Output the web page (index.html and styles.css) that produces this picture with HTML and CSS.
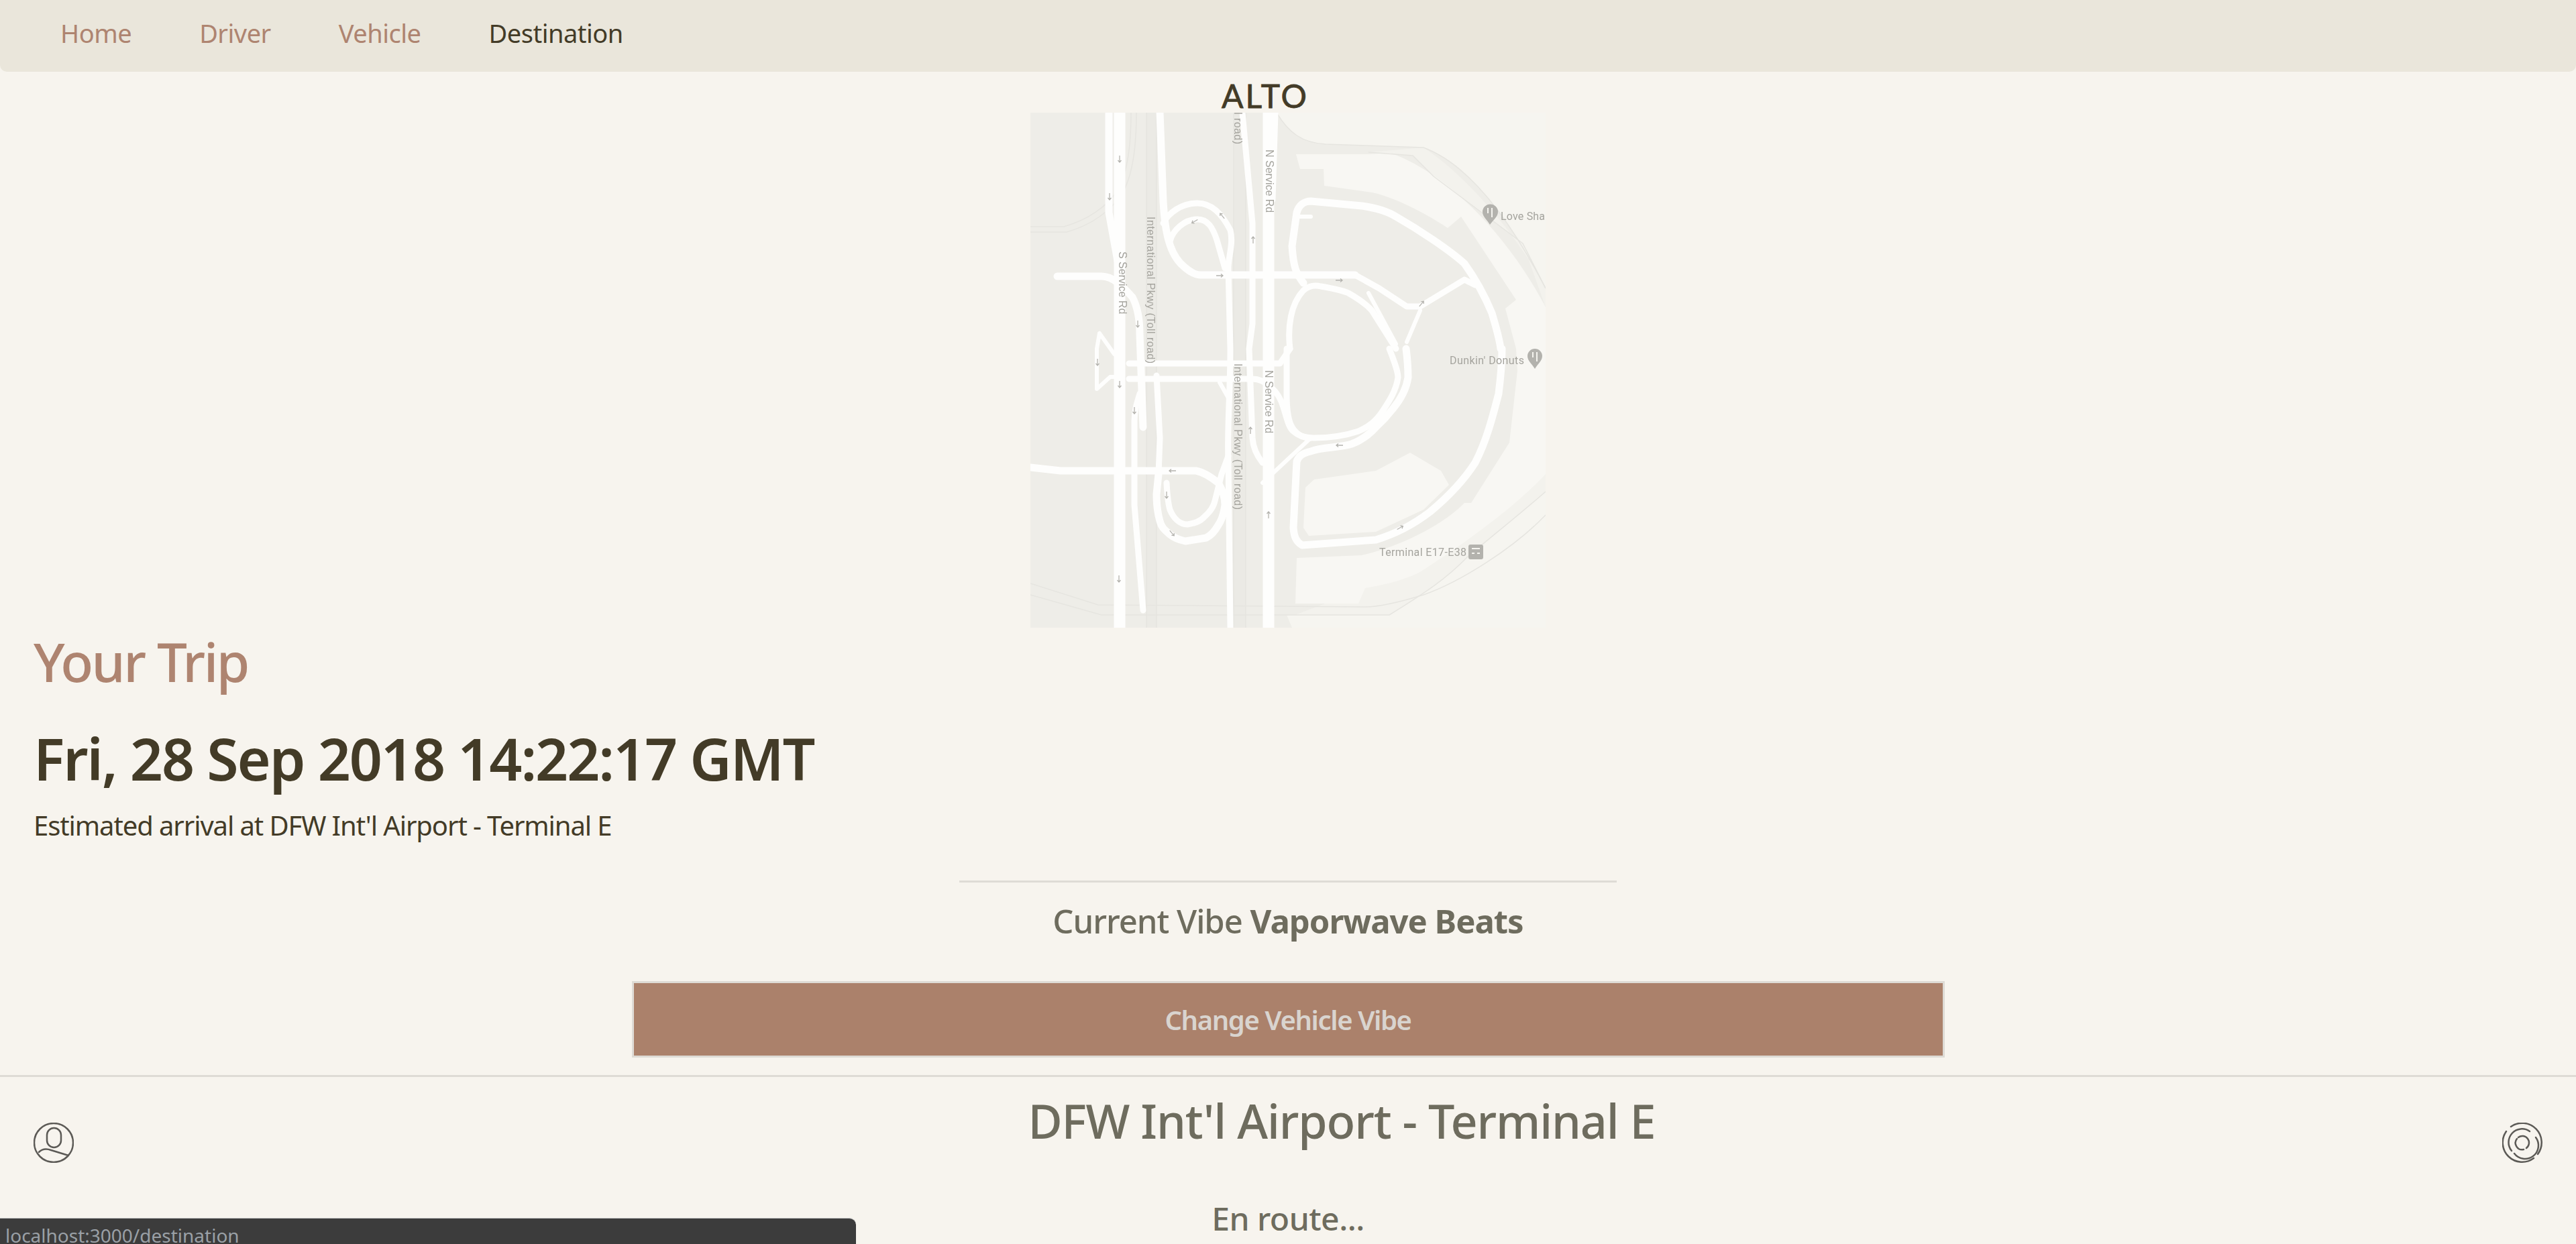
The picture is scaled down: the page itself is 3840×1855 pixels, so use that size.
FILE: index.html
```html
<!DOCTYPE html>
<html lang="en">
<head>
<meta charset="UTF-8">
<meta name="viewport" content="width=device-width, initial-scale=1.0">
<title>Alto</title>
<link rel="stylesheet" href="styles.css">
</head>
<body>
<nav class="navbar">
    <a class="nav-link" href="#">Home</a>
    <a class="nav-link" href="#">Driver</a>
    <a class="nav-link" href="#">Vehicle</a>
    <a class="nav-link active" href="#">Destination</a>
</nav>

<div class="logo">ALTO</div>

<svg class="map" viewBox="0 0 768 768" role="img" aria-label="Map of DFW Terminal E">
    <defs>
        <g id="arrow"><path d="M0 -5V5M-2.500 2L0 5L2.500 2"/></g>
    </defs>
    <rect width="768" height="768" fill="#eeede8"/>
    <path class="outside" d="M367 0C385 30 405 45 440 47L586 52C640 72 700 130 768 262V0Z"/>
    <path class="band" d="M768 262C740 205 660 100 586 52L504 59L570 64L601 95L734 195L768 290V600C720 650 640 700 586 719C560 735 545 745 535 749H395L499 709L581 685L768 539Z"/>
    <path class="outside" d="M768 565C740 590 690 630 652 662C620 695 590 715 535 749H382L390 768H768Z"/>
    <path class="apron" d="M396 62H504L535 60C600 80 700 160 768 290V539C720 590 650 640 581 685C550 700 520 705 499 709L489 732H395L397 664L494 660C540 650 610 620 647 582H657L714 492L726 385L724 352L708 292L724 279L642 155L622 172C590 150 540 125 509 119L438 109L437 84H402Z"/>
    <path class="apron" d="M410 559L423 547L515 534L566 507L612 534L624 555L586 592L515 625L415 631L407 619Z"/>
    <rect class="toll" x="173" width="15" height="768"/>
    <rect class="toll" x="303" width="18" height="768"/>

    <g class="thin">
        <path d="M367 0C385 30 405 45 440 47L586 52C640 72 700 130 768 262"/>
        <path d="M504 59L570 64L601 95L734 195L768 262"/>
        <path d="M0 170H50C85 160 115 140 130 115C145 90 150 50 150 0"/>
        <path d="M0 178H54C90 168 122 146 138 118C153 92 158 50 158 0"/>
        <path d="M768 565C740 590 690 630 652 662C620 695 590 715 535 749H382L106 749L0 719"/>
        <path d="M768 600C720 650 640 700 586 719C550 730 520 737 499 737L101 734L0 702"/>
        <path d="M173 0V768M188 0V768M303 0V768M321 0V768"/>
        <path d="M348 0V768"/>
    </g>

    <g class="road">
        <path class="wide" d="M133 0V768"/>
        <path class="wide" d="M355 0V768"/>
        <path class="mid" d="M117 0V149L132 232"/>
        <path d="M365 0L361 130"/>
        <path class="mid" d="M193 0L198 132C200 170 205 205 224 225C235 236 245 242 254 242H484"/>
        <path d="M198 165C205 150 225 135 249 135C270 135 285 150 298 175C303 195 295 215 295 232L298 352C298 420 293 470 295 520L298 768"/>
        <path d="M208 192C212 175 230 159 249 159C265 159 272 172 278 190L290 232"/>
        <path d="M316 0L331 165V315L326 352L331 485C332 500 338 512 346 522"/>
        <path class="mid" d="M40 244H106C125 244 140 262 152 275C160 290 163 310 163 330L168 469"/>
        <path d="M163 419C158 435 155 445 155 460V585L168 742"/>
        <path class="narrow" d="M103 329L99 352V412L119 394H133M103 329L125 360"/>
        <path d="M147 374H372L387 352"/>
        <path d="M147 397H331C350 397 370 415 377 439C382 455 385 470 392 475C400 482 410 485 418 485"/>
        <path class="narrow" d="M282 402L295 425"/>
        <path d="M387 352C383 320 388 285 407 265C415 258 425 257 433 259C450 262 465 265 474 269C490 278 500 285 509 295L545 352"/>
        <path d="M535 352C542 370 548 385 548 395C545 415 535 430 525 445C515 460 505 468 489 475C465 483 445 485 423 485C405 485 395 480 388 465C384 455 382 440 382 420V352"/>
        <path class="mid" d="M560 352C563 375 563 385 563 395C560 415 550 430 540 442C530 455 525 460 515 469C505 480 495 488 479 494C460 500 435 498 418 505C405 508 400 512 397 520L392 619C393 632 396 640 405 645L515 637C545 628 570 615 596 595C620 575 645 550 663 522C680 490 690 450 698 419C701 395 703 375 703 352"/>
        <path class="mid" d="M407 254C396 240 392 230 390 199L397 149C400 138 408 132 418 132L494 139C515 142 532 147 545 155C580 175 625 205 647 225C665 250 678 275 688 299C694 320 699 335 701 352"/>
        <path class="narrow" d="M397 155H418"/>
        <path d="M484 242L520 262L561 289H581L647 249L663 257"/>
        <path class="narrow" d="M581 295L561 342M504 269L545 345M418 485L346 552M282 402L295 425"/>
        <path class="mid" d="M0 529L45 534H247C258 536 270 544 280 552C288 565 290 575 290 585C288 600 285 608 280 615C275 624 270 630 262 634L231 639C222 637 214 634 208 629C200 622 195 618 193 609C189 595 188 580 188 569L191 539"/>
        <path d="M203 552C204 570 205 582 208 592C213 604 222 614 234 614C245 612 253 610 260 602C268 595 273 588 275 579L285 539L295 512"/>
        <path d="M188 392L193 485L191 539"/>
    </g>

    <g class="arrows">
        <use href="#arrow" x="133" y="69"/>
        <use href="#arrow" x="118" y="125"/>
        <use href="#arrow" x="160" y="315"/>
        <use href="#arrow" x="100" y="372"/>
        <use href="#arrow" x="133" y="405"/>
        <use href="#arrow" x="155" y="444"/>
        <use href="#arrow" x="203" y="570"/>
        <use href="#arrow" x="132" y="695"/>
        <use href="#arrow" transform="translate(332 190) rotate(180)"/>
        <use href="#arrow" transform="translate(328 474) rotate(180)"/>
        <use href="#arrow" transform="translate(355 600) rotate(180)"/>
        <use href="#arrow" transform="translate(282 243) rotate(-90)"/>
        <use href="#arrow" transform="translate(460 250) rotate(-90)"/>
        <use href="#arrow" transform="translate(461 496) rotate(90)"/>
        <use href="#arrow" transform="translate(212 534) rotate(90)"/>
        <use href="#arrow" transform="translate(286 154) rotate(140)"/>
        <use href="#arrow" transform="translate(245 162) rotate(60)"/>
        <use href="#arrow" transform="translate(583 285) rotate(-140)"/>
        <use href="#arrow" transform="translate(211 627) rotate(-40)"/>
        <use href="#arrow" transform="translate(551 619) rotate(-120)"/>
    </g>

    <g class="label">
        <text transform="translate(132 207) rotate(90)">S Service Rd</text>
        <text transform="translate(174 155) rotate(90)" textLength="219">International Pkwy (Toll road)</text>
        <text transform="translate(304 374) rotate(90)" textLength="218">International Pkwy (Toll road)</text>
        <text transform="translate(304 -171) rotate(90)" textLength="218">International Pkwy (Toll road)</text>
        <text transform="translate(351 55) rotate(90)">N Service Rd</text>
        <text transform="translate(350 384) rotate(90)">N Service Rd</text>
        <text class="poi" x="701" y="160" textLength="66">Love Sha</text>
        <text class="poi" x="625" y="375" textLength="111">Dunkin' Donuts</text>
        <text class="poi" x="520" y="661" textLength="130">Terminal E17-E38</text>
    </g>
    <path class="pin" d="M685 167C681 160 674 155 674 148A11.500 11.500 0 0 1 697 148C697 155 690 160 685 167Z"/>
    <path class="pin-mark" d="M682 142V150M688 142V156"/>
    <path class="pin" d="M752 382C748 375 741 370 741 363A11 11 0 0 1 763 363C763 370 756 375 752 382Z"/>
    <path class="pin-mark" d="M749 357V365M755 357V371"/>
    <rect class="pin" x="653" y="644" width="22" height="22" rx="3"/>
    <path class="pin-mark" d="M658 650H670M658 657H662M666 657H670"/>
</svg>

<div class="trip">
    <h2 class="trip-title">Your Trip</h2>
    <h1 class="trip-time">Fri, 28 Sep 2018 14:22:17 GMT</h1>
    <p class="trip-eta">Estimated arrival at DFW Int'l Airport - Terminal E</p>
</div>

<hr class="vibe-rule">
<p class="vibe">Current Vibe <b>Vaporwave Beats</b></p>
<button class="vibe-button">Change Vehicle Vibe</button>

<footer class="footer">
    <svg class="footer-icon" viewBox="0 0 60 60">
        <circle cx="30" cy="30" r="29"/>
        <rect x="20" y="8" width="21" height="29" rx="10.500"/>
        <path d="M8 44C12 40 18 38 26 41L52 49"/>
    </svg>
    <div class="footer-main">
        <h2 class="destination">DFW Int'l Airport - Terminal E</h2>
        <p class="status">En route...</p>
    </div>
    <svg class="footer-icon" viewBox="0 0 60 60">
        <path d="M13 6A29 29 0 0 1 53 47"/>
        <path d="M47 53A29 29 0 0 1 6 13"/>
        <path d="M41 13A20 20 0 0 0 14 42"/>
        <path d="M18 46A20 20 0 0 0 50 22"/>
        <path d="M24 22A10 10 0 0 1 36 38"/>
        <path d="M32 40A10 10 0 0 1 22 24"/>
    </svg>
</footer>

<div class="link-status">localhost:3000/destination</div>
</body>
</html>
```

FILE: styles.css
```css
html {
    overflow: hidden;
}

body {
    font-family: "Noto Sans", "Open Sans", sans-serif;
    background-color: #f7f4ee;
    color: #433b27;
    height: 100vh;
    margin: 0;
    overflow: hidden;
}

.navbar {
    display: flex;
    gap: 101px;
    height: 107px;
    padding: 0 90px 10px;
    box-sizing: border-box;
    align-items: center;
    background-color: #eae6db;
    border-radius: 0 0 10px 10px;
}

.nav-link {
    font-size: 38px;
    letter-spacing: -0.5px;
    text-decoration: none;
    color: #ae8470;
}

.nav-link.active {
    color: #433b27;
}

.logo {
    height: 61px;
    padding-right: 68px;
    box-sizing: border-box;
    font-family: Lato, sans-serif;
    font-size: 48px;
    line-height: 72px;
    letter-spacing: 3px;
    text-align: center;
    -webkit-text-stroke: 0.8px #433b27;
}

.map {
    display: block;
    width: 768px;
    height: 768px;
    margin: 0 auto;
    filter: blur(0.7px);
}

.outside {
    fill: #f6f5f0;
}

.band {
    fill: #f3f2ed;
}

.apron {
    fill: #f8f7f3;
}

.toll {
    fill: #ebeae5;
}

.thin path {
    fill: none;
    stroke: #e6e5e0;
    stroke-width: 1.5;
}

.road path {
    fill: none;
    stroke: #fefefd;
    stroke-width: 9;
    stroke-linejoin: round;
    stroke-linecap: round;
}

.road .wide {
    stroke-width: 17;
}

.road .mid {
    stroke-width: 11;
}

.road .narrow {
    stroke-width: 6;
}

.arrows {
    fill: none;
    stroke: #b4b3ae;
    stroke-width: 1.3;
}

.label text {
    font-family: "Liberation Sans", sans-serif;
    font-size: 16px;
    fill: #a5a49e;
}

.label .poi {
    font-family: Roboto, sans-serif;
    font-size: 16px;
}

.pin {
    fill: #b3b2ad;
}

.pin-mark {
    fill: none;
    stroke: #f5f4ef;
    stroke-width: 2;
}

.trip {
    padding-left: 50px;
}

.trip-title {
    margin: 0;
    font-size: 80px;
    font-weight: 500;
    letter-spacing: -2.500px;
    line-height: 100px;
    color: #ae8470;
}

.trip-time {
    margin: 35px 0 0;
    font-size: 86px;
    font-weight: 600;
    letter-spacing: -2.100px;
    line-height: 120px;
}

.trip-eta {
    margin: 10px 0 0;
    font-size: 40px;
    letter-spacing: -1.100px;
    line-height: 60px;
}

.vibe-rule {
    width: 980px;
    height: 3px;
    margin: 52px auto 0;
    border: none;
    background-color: #dedbd5;
}

.vibe {
    margin: 22px 0 0;
    font-size: 49px;
    font-weight: 500;
    letter-spacing: -1px;
    line-height: 70px;
    text-align: center;
    color: #6e6c5e;
}

.vibe-button {
    display: block;
    width: 1957px;
    height: 114px;
    margin: 55px auto 0;
    border: 3px solid #dedbd5;
    background-color: #ab816b;
    color: #d9d4cf;
    font-family: inherit;
    font-size: 40px;
    font-weight: 600;
    letter-spacing: -1.400px;
}

.footer {
    display: flex;
    justify-content: space-between;
    margin-top: 26px;
    padding: 0 50px;
    border-top: 3px solid #dedbd5;
}

.footer-icon {
    width: 60px;
    height: 60px;
    margin-top: 68px;
    fill: none;
    stroke: #5c5a56;
    stroke-width: 2.500;
    stroke-linecap: round;
    filter: blur(0.4px);
}

.footer-main {
    flex: 1;
    text-align: center;
}

.destination {
    margin: 15px 0 0 160px;
    font-size: 70px;
    font-weight: 500;
    letter-spacing: -1.100px;
    line-height: 100px;
    color: #6e6c5e;
}

.status {
    margin: 66px 0 0;
    font-size: 48px;
    font-weight: 500;
    letter-spacing: -0.500px;
    line-height: 60px;
    color: #6e6c5e;
}

/* browser link preview, sits over the page */
.link-status {
    position: fixed;
    left: 0;
    bottom: 0;
    width: 1276px;
    height: 39px;
    padding-left: 8px;
    box-sizing: border-box;
    overflow: hidden;
    background-color: #3c3c3c;
    border-top: 1px solid #c8c8c8;
    border-radius: 0 10px 0 0;
    color: #9aa0a6;
    font-size: 28px;
    line-height: 50px;
}
```
